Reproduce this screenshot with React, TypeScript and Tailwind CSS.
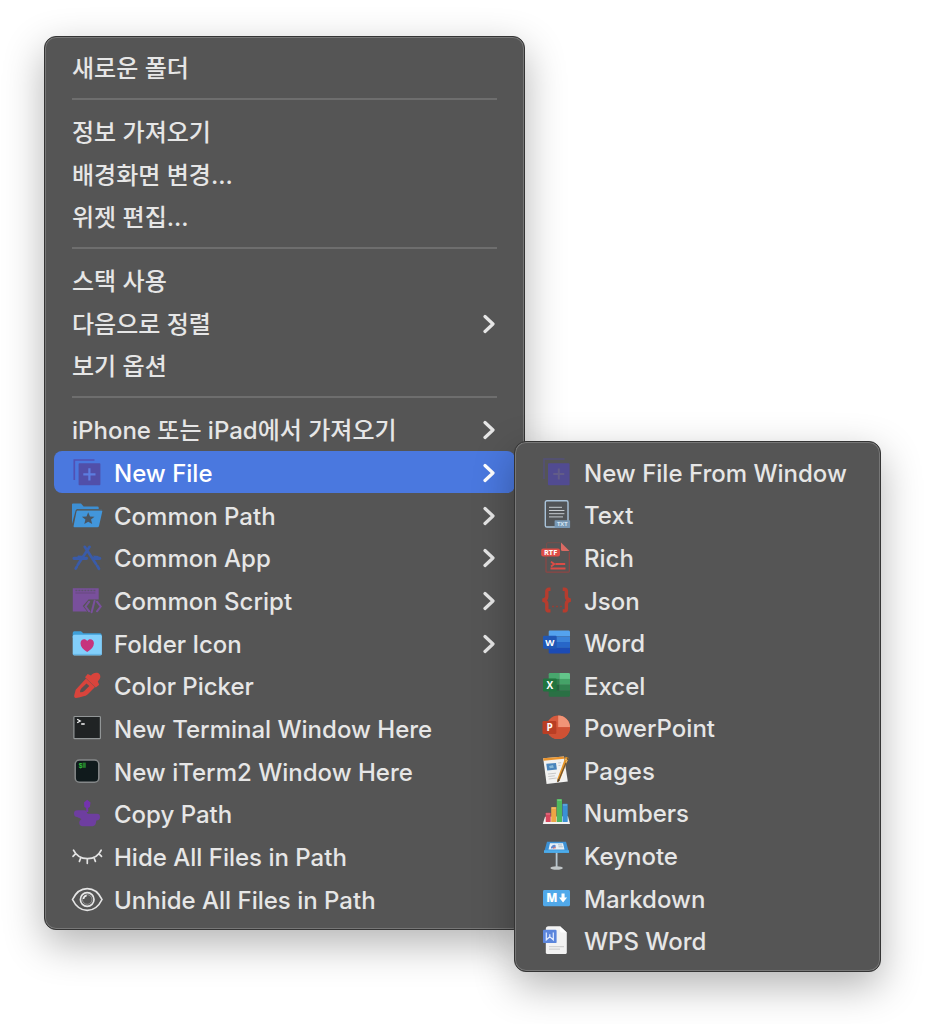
import type { ReactNode } from "react";

function Icon({ children }: { children: ReactNode }) {
  return (
    <svg viewBox="0 0 30 30" aria-hidden="true" className="size-[30px] shrink-0 overflow-visible" fill="none">
      {children}
    </svg>
  );
}

const badgeFont = '"Open Sans", sans-serif';

const NewFileIcon = () => (
  <Icon>
    <path d="M2.3 22V2H22.5" stroke="#5150b4" strokeWidth="1.7" />
    <rect x="6.6" y="5.3" width="21.8" height="22" rx="0.8" fill="#514fa9" />
    <path d="M17.4 10.2v12.2M11.3 16.3h12.2" stroke="#5c7de0" strokeWidth="2.2" />
  </Icon>
);

const CommonPathIcon = () => (
  <Icon>
    <path d="M0 23V3.3Q0 2.4 1 2.4H9l2.6 3H25.5Q26.7 5.4 26.7 6.6V8H5.6Q4 8 3.6 9.6Z" fill="#3d8fd3" />
    <path d="M5.6 9.4H29.4Q30.6 9.4 30.3 10.6L27 25Q26.7 26.3 25.4 26.3H2.5Q1.3 26.3 1.6 25L4.5 10.4Q4.7 9.4 5.6 9.4Z" fill="#4296db" />
    <path d="M5.6 8.7H30" stroke="#50606c" strokeWidth="1" />
    <path d="m16.2 11.2 1.8 4.2 4.5.3-3.5 2.9 1.2 4.5-4-2.4-3.9 2.4 1.1-4.5-3.5-2.9 4.6-.3Z" fill="#4a5560" />
  </Icon>
);

const CommonAppIcon = () => (
  <Icon>
    <g stroke="#3a5ba8" strokeWidth="2.7" strokeLinecap="round">
      <path d="M12.7 3.8 24 21M17.6 3.8 5.8 21.8M4.8 23.7 3.7 25.5M25.2 22.8l1.8 3" />
      <path d="M2 15.3h12.5M21.5 15.3h6.2" strokeWidth="3.2" />
    </g>
    <path d="m6 12.5 5 .3-2 3-4-1Z" fill="#3a5ba8" />
    <path d="m21 12.500 5.500.5v2h-4Z" fill="#3a5ba8" />
  </Icon>
);

const CommonScriptIcon = () => (
  <Icon>
    <path d="M.8 2.2H26.7V13.5H16.5L10.8 20l4.400 5.600H.8Z" fill="#79509c" />
    <path d="M3.4 4.5h20" stroke="#5e5370" strokeWidth="1.4" strokeDasharray="2 1" />
    <path d="M3.4 7h20" stroke="#68487f" strokeWidth="1" />
    <path d="m17.200 15.700-3.700 4.800 3.700 4.800M25 15.700l3.700 4.800-3.700 4.800M22.600 14.800l-3 11.400" stroke="#79509c" strokeWidth="2" strokeLinecap="round" />
  </Icon>
);

const FolderHeartIcon = () => (
  <Icon>
    <path d="M.7 7V4Q.7 2.3 2.4 2.3H9l2.3 2H28Q29.7 4.3 29.7 6v3H.7Z" fill="#3e9fd8" />
    <rect x=".7" y="5.8" width="29.2" height="20.6" rx="1.6" fill="#82cffb" />
    <path d="M1 25.4h28.6" stroke="#65b4e4" />
    <path d="M15.2 22.9C11 20.400 8.500 17.600 8.500 14.200c0-4.200 4.800-5.200 6.700-2.200 1.900-3 6.700-2 6.700 2.200 0 3.400-2.500 6.200-6.700 8.700Z" fill="#c6337c" />
  </Icon>
);

const ColorPickerIcon = () => (
  <Icon>
    <path d="M19 4.500C21 1.700 25.500.8 27.600 3.300 29.300 6 27.800 8.500 25.800 10.400l1.400 3.400-3.400 2.700L13 6.300l2.700-3.300Z" fill="#d9443c" />
    <path d="m14 7.400 9 8.500-7.200 7.300Q13.800 25 11.500 25.200L7 26.500 4 27Q1.600 26.500 2.300 24L3.700 18.700Z" fill="#d9443c" />
    <path d="m9.500 17.300 5-4.800 2.800 2.600-5 4.900Q11 21.300 8 21.200q-.1-2.500 1.500-3.900Z" fill="#5c504f" />
  </Icon>
);

const TerminalIcon = () => (
  <Icon>
    <rect x="1.900" y="2.500" width="26.500" height="22.200" rx=".8" fill="#202324" stroke="#929697" strokeWidth="1.200" />
    <path d="m5.200 5.300 3 1.700-3 1.700M9.200 10h3.500" stroke="#f6f6f6" strokeWidth="1.300" />
  </Icon>
);

const ITermIcon = () => (
  <Icon>
    <rect x="3.200" y="2.900" width="23.600" height="22.400" rx="4.300" fill="#101a1c" stroke="#858889" strokeWidth="1.500" />
    <text x="6.500" y="10.800" fontFamily='"Liberation Mono", monospace' fontWeight="700" fontSize="7" fill="#32bb38">$</text>
    <rect x="10.600" y="5.600" width="3.200" height="5.200" fill="#237a2b" />
  </Icon>
);

const CopyPathIcon = () => (
  <Icon>
    <path d="M15.200.8 18.500 3.600 17.900 8 15.200 9.600 12.400 8 12 3.600Z" fill="#7433ad" />
    <path d="M14.200 8.500h2v4.500h-2Z" fill="#7433ad" />
    <path d="M5.500 11.200H12.300Q15 11.200 15 13.900l1 .9h9Q28 14.800 28 18 28 21.300 24.300 21.500 24 27 20.500 27.300H11Q7.300 27.300 7.200 23.500q0-2 2.200-3.500L5 18Q2 17.700 2 14.500 2 11.200 5.500 11.200Z" fill="#6e3ea0" />
  </Icon>
);

const ClosedEyeIcon = () => (
  <Icon>
    <path d="M1.500 8.200C7 19.500 24 19.500 29.200 8.200M3.700 11.600 1 14.300M9 15.200l-1.600 4.200M15.300 17v4.300M21.800 15.200l1.600 4.200M26.800 11.600l2.700 2.700" stroke="#e3e3e3" strokeWidth="1.700" strokeLinecap="round" />
  </Icon>
);

const OpenEyeIcon = () => (
  <Icon>
    <path d="M.5 14.500C7.500 0 23 0 30 14.500 23 29 7.500 29 .5 14.500Z" stroke="#e5e5e5" strokeWidth="1.700" />
    <circle cx="15.200" cy="14.500" r="6.800" stroke="#e5e5e5" strokeWidth="1.700" />
    <circle cx="15.200" cy="14.500" r="4.800" stroke="#a8a8a8" strokeWidth=".7" />
    <path d="M11.500 14q.2-3 3.200-3.600" stroke="#eee" strokeWidth="1.500" />
  </Icon>
);

const NewFileDimIcon = () => (
  <Icon>
    <path d="M2 21V1h20.500" stroke="#53507a" strokeWidth="1.500" />
    <rect x="6" y="5.300" width="21.600" height="22" rx=".8" fill="#514b91" />
    <path d="M16.800 10.500v11M11.300 16h11" stroke="#625c88" strokeWidth="2" />
  </Icon>
);

const TextIcon = () => (
  <Icon>
    <rect x="3.300" y=".8" width="22.700" height="26.200" rx="1.600" fill="#515457" stroke="#a9c3da" strokeWidth="1.400" />
    <path d="M7 7.300h13M7 10.500h15.400M7 13.700h15.400M7 16.900h14" stroke="#c5cbd0" strokeWidth="1" />
    <rect x="12.600" y="20.300" width="15.500" height="7.700" rx=".7" fill="#7898b5" />
    <text x="20.300" y="26.200" textAnchor="middle" fontFamily={badgeFont} fontWeight="700" fontSize="5.800" fill="#d5e5f1">TXT</text>
  </Icon>
);

const RichIcon = () => (
  <Icon>
    <path d="M4 14v14.200Q4 29.200 5 29.200H26.500Q27.300 29.200 27.300 28V9" stroke="#8e4644" strokeWidth="1.200" />
    <path d="M4.500 5V1Q4.500-.3 6-.3H18.500" stroke="#754e4b" />
    <path d="M19-.5 27.500 8H20.500Q19 8 19 6.500Z" fill="#db6a63" />
    <rect x="-.8" y="5.500" width="18.800" height="8" rx="2" fill="#df4d46" />
    <text x="8.600" y="12.200" textAnchor="middle" fontFamily={badgeFont} fontWeight="700" fontSize="7.400" fill="#fff">RTF</text>
    <path d="m9 18.800 3.200 2.200L9 23.500M13.500 21h9.700M8.500 25.500h15" stroke="#dc4c46" strokeWidth="1.800" />
  </Icon>
);

const JsonIcon = () => (
  <Icon>
    <path d="M8.500 3.300H7Q4.800 3.300 4.800 5.500v5Q4.800 13.500.5 14.100q4.300.6 4.300 3.600v5Q4.800 24.900 7 24.900H8.500M20.700 3.300h1.500q2.200 0 2.200 2.200v5q0 3 4.300 3.600-4.300.6-4.300 3.600v5q0 2.200-2.200 2.200h-1.500" stroke="#b63c2e" strokeWidth="3.400" />
    <path d="M10 20.500h10" stroke="#923f36" strokeWidth="1.600" strokeDasharray="2 2" />
  </Icon>
);

const WordIcon = () => (
  <Icon>
    <path d="M6.700 3.700Q6.700 2.500 7.900 2.500H26.600Q28 2.500 28 3.900V8.300H6.700Z" fill="#54a3ee" />
    <path fill="#3b83d8" d="M6.700 8.300H28V14H6.700Z" />
    <path fill="#2766c8" d="M6.700 14H28v5.900H6.700Z" />
    <path d="M6.700 19.900H28V24.300Q28 25.500 26.600 25.500H7.900Q6.700 25.500 6.700 24.300Z" fill="#1c4bb4" />
    <rect x="1" y="7.700" width="13.700" height="13" rx="1.200" fill="#2158b5" />
    <text x="7.900" y="17.700" textAnchor="middle" fontFamily={badgeFont} fontWeight="700" fontSize="9.500" fill="#fff">W</text>
  </Icon>
);

const ExcelIcon = () => (
  <Icon>
    <path d="M6.700 3.200Q6.700 2 7.900 2H17.400V7.900H6.700Z" fill="#48a66d" />
    <path d="M17.400 2H26.600Q28 2 28 3.200V7.900H17.400Z" fill="#63c58a" />
    <path fill="#2f7d4d" d="M6.700 7.900h10.700v5.900H6.700Z" />
    <path fill="#45a368" d="M17.400 7.900H28v5.900H17.400Z" />
    <path fill="#24633e" d="M6.700 13.800h10.700v5.900H6.700Z" />
    <path fill="#31824f" d="M17.400 13.800H28v5.900H17.400Z" />
    <path d="M6.700 19.700H28V24.500Q28 25.700 26.600 25.700H7.900Q6.700 25.700 6.700 24.500Z" fill="#2a7044" />
    <rect x="1" y="7.500" width="13.700" height="13" rx="1.200" fill="#21743f" />
    <text x="7.900" y="17.500" textAnchor="middle" fontFamily={badgeFont} fontWeight="700" fontSize="10" fill="#fff">X</text>
  </Icon>
);

const PowerPointIcon = () => (
  <Icon>
    <circle cx="16.200" cy="14.300" r="11.800" fill="#d75a3d" />
    <path d="M16.200 2.500A11.800 11.800 0 0 1 28 14.300H16.200Z" fill="#f19477" />
    <path d="M28 14.300A11.800 11.800 0 0 1 4.400 14.300Z" fill="#cf5134" />
    <rect x=".5" y="8" width="13.800" height="13" rx="1.200" fill="#b93e24" />
    <text x="7.600" y="18" textAnchor="middle" fontFamily={badgeFont} fontWeight="700" fontSize="10" fill="#fff">P</text>
  </Icon>
);

const PagesIcon = () => (
  <Icon>
    <path d="M1.200 2.300 22 .5 25.800 25.500 4.600 28Z" fill="#f2f2f1" />
    <path d="m1.200 2.300 20.800-1.800.4 2.300-20.800 2Z" fill="#e9942e" />
    <path d="m4.300 7.800 9.700-.9.900 6.700-9.700 1Z" fill="#4984bb" />
    <path d="m7 10 4-1 .8 2.700-4 .6Z" fill="#88b9d8" />
    <path d="m6 18 8-.8M6.300 20.500l6.500-.7M6.700 23l8-1M16.200 7l3-.3M16.500 9.500l2-.2" stroke="#bcbcbc" strokeWidth=".8" />
    <path d="m23.600.8 3 1.300-8.800 22.200-2.700 2 .2-3.300Z" fill="#e59528" />
    <path d="m26 2-9.800 23.500" stroke="#6e5332" strokeWidth="1.200" />
    <path d="m22.800 3 2.400 1-1.300 3" stroke="#f8be61" strokeWidth="1" />
    <path d="m16 22.700-.8 3.600 2.500-1.900" fill="#403f3d" />
  </Icon>
);

const NumbersIcon = () => (
  <Icon>
    <path d="m3 18.800 23-.5 2 7.700H.8Z" fill="#f2f1f1" />
    <rect x="3.700" y="14.700" width="5" height="9.300" rx=".6" fill="#d7475d" />
    <rect x="9.200" y="9" width="5.200" height="15" rx=".6" fill="#eca545" />
    <rect x="14.800" y="1" width="5.200" height="23" rx=".6" fill="#4fb85e" />
    <rect x="20.500" y="5.800" width="5.200" height="18.200" rx=".6" fill="#3a91d6" />
    <path d="M4 16h4M9.600 10.200h4.200M15.400 2.200h4M21 7h4" stroke="#fff" strokeOpacity=".3" />
  </Icon>
);

const KeynoteIcon = () => (
  <Icon>
    <path d="M14.600 11v15.800" stroke="#b9c6cf" strokeWidth="1.800" />
    <ellipse cx="14.600" cy="27" rx="6.200" ry="1.800" fill="#c1c6c8" />
    <path d="M5 .8H24L27 11.500H2Z" fill="#3c91d5" />
    <path d="m8 2.300 13-.1 1.500 6.300H6.500Z" fill="#e7f0f6" />
    <path d="M2 9.300h25v2.600H2Z" fill="#4caceb" />
    <path d="M9 6q3-4 5-1l-1.500 2-3.500.5Z" fill="#6188ce" />
    <path d="m16 3.800 4 .2M16.500 5.800h4.300" stroke="#a8b6c1" strokeWidth=".9" />
    <path d="m11 7.200 3-.5" stroke="#e76e5b" />
  </Icon>
);

const MarkdownIcon = () => (
  <Icon>
    <rect x="1" y="6" width="27" height="16.200" rx="1.400" fill="#51a9ea" />
    <text x="9.800" y="18" textAnchor="middle" fontFamily={badgeFont} fontWeight="800" fontSize="11.500" fill="#fff">M</text>
    <path d="M19.500 9.600h3.100v4h2.500l-4.050 4.800-4.050-4.800h2.500Z" fill="#fff" />
  </Icon>
);

const WpsIcon = () => (
  <Icon>
    <path d="M6.500.2H18L24.800 6.500V26.800Q24.800 27.900 23.700 27.900H5Q3.800 27.900 3.800 26.800V3Q3.800.2 6.500.2Z" fill="#f3f3f3" />
    <path d="m18 .2 6.800 6.300H19.500Q18 6.500 18 5Z" fill="#fff" />
    <path d="M7 20.700h15M7 23.200h11" stroke="#d1d1d1" strokeWidth="1.200" />
    <rect x="1" y="3.700" width="13.600" height="13.400" rx="1.200" fill="#5c86dc" />
    <path d="M4.300 6.500v7.300L7.800 10.700l3.500 3.100V6.500M7.800 8.200v2.500" stroke="#e4edff" strokeWidth="1.200" />
  </Icon>
);

type Entry = { label: string; icon?: ReactNode; arrow?: boolean; active?: boolean; submenu?: Entry[] };

const fileTypes: Entry[] = [
  { label: "New File From Window", icon: <NewFileDimIcon /> },
  { label: "Text", icon: <TextIcon /> },
  { label: "Rich", icon: <RichIcon /> },
  { label: "Json", icon: <JsonIcon /> },
  { label: "Word", icon: <WordIcon /> },
  { label: "Excel", icon: <ExcelIcon /> },
  { label: "PowerPoint", icon: <PowerPointIcon /> },
  { label: "Pages", icon: <PagesIcon /> },
  { label: "Numbers", icon: <NumbersIcon /> },
  { label: "Keynote", icon: <KeynoteIcon /> },
  { label: "Markdown", icon: <MarkdownIcon /> },
  { label: "WPS Word", icon: <WpsIcon /> },
];

const entries: (Entry | null)[] = [
  { label: "새로운 폴더" },
  null,
  { label: "정보 가져오기" },
  { label: "배경화면 변경..." },
  { label: "위젯 편집..." },
  null,
  { label: "스택 사용" },
  { label: "다음으로 정렬", arrow: true },
  { label: "보기 옵션" },
  null,
  { label: "iPhone 또는 iPad에서 가져오기", arrow: true },
  { label: "New File", icon: <NewFileIcon />, arrow: true, active: true, submenu: fileTypes },
  { label: "Common Path", icon: <CommonPathIcon />, arrow: true },
  { label: "Common App", icon: <CommonAppIcon />, arrow: true },
  { label: "Common Script", icon: <CommonScriptIcon />, arrow: true },
  { label: "Folder Icon", icon: <FolderHeartIcon />, arrow: true },
  { label: "Color Picker", icon: <ColorPickerIcon /> },
  { label: "New Terminal Window Here", icon: <TerminalIcon /> },
  { label: "New iTerm2 Window Here", icon: <ITermIcon /> },
  { label: "Copy Path", icon: <CopyPathIcon /> },
  { label: "Hide All Files in Path", icon: <ClosedEyeIcon /> },
  { label: "Unhide All Files in Path", icon: <OpenEyeIcon /> },
];

const panel =
  "flex flex-col rounded-[12px] border border-[#343434] bg-[#555555] px-[9px] py-[9px] shadow-[inset_0_0_0_1px_#777777,0_14px_40px_rgba(0,0,0,0.3)]";

function MenuItem({ entry }: { entry: Entry }) {
  return (
    <li role="none" className="relative flex flex-1">
      <button
        type="button"
        role="menuitem"
        aria-haspopup={entry.arrow ? "menu" : undefined}
        aria-expanded={entry.submenu ? true : undefined}
        className={
          entry.active
            ? "flex w-full items-center gap-3 rounded-[8px] bg-[#4a78df] pt-0.5 pr-5 pl-[18px] text-left font-medium whitespace-nowrap text-white"
            : "flex w-full items-center gap-3 rounded-[8px] pt-0.5 pr-5 pl-[18px] text-left font-medium whitespace-nowrap"
        }
      >
        {entry.icon}
        <span className="grow pt-0.5">{entry.label}</span>
        {entry.arrow && (
          <svg viewBox="0 0 12 20" aria-hidden="true" className="h-5 w-3 shrink-0" fill="none">
            <path d="m2 2.500 8 7.500-8 7.500" stroke="currentColor" strokeWidth="3.200" strokeLinecap="round" strokeLinejoin="round" />
          </svg>
        )}
      </button>
      {entry.submenu && (
        <ul role="menu" aria-label={entry.label} className={`${panel} absolute -top-[10px] left-full z-10 -ml-px min-h-[531px] min-w-[367px] text-[#e6e6e6]`}>
          {entry.submenu.map((item) => (
            <MenuItem key={item.label} entry={item} />
          ))}
        </ul>
      )}
    </li>
  );
}

export default function App() {
  return (
    <main className="min-h-screen bg-white px-11 pt-9 pb-12 font-['Inter','Noto_Sans_CJK_KR',sans-serif] text-[24px] leading-8 text-[#e6e6e6]">
      <ul role="menu" aria-label="Desktop" className={`${panel} min-h-[894px] w-full max-w-[481px]`}>
        {entries.map((entry, index) =>
          entry ? (
            <MenuItem key={entry.label} entry={entry} />
          ) : (
            <li key={index} role="separator" className="flex h-[21px] items-center px-[18px]">
              <span className="h-[2px] w-full bg-[#6e6e6e]" />
            </li>
          ),
        )}
      </ul>
    </main>
  );
}
